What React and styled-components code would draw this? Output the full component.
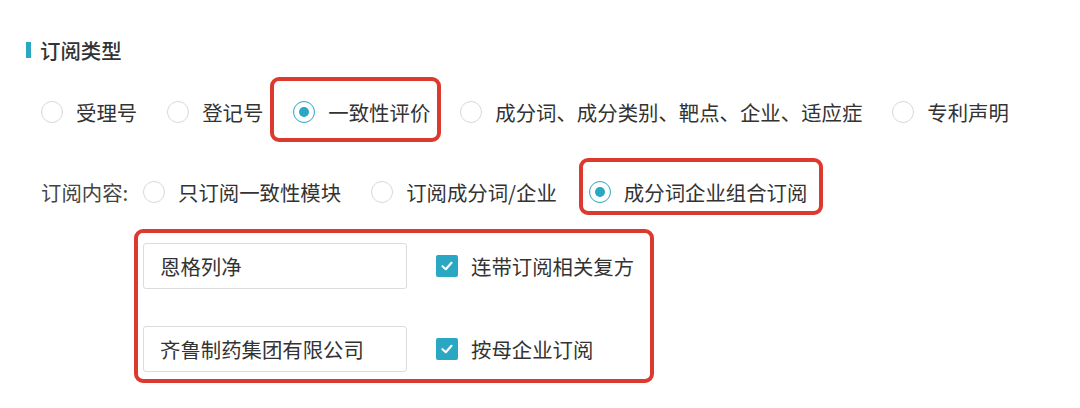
import React from 'react'
import styled, { createGlobalStyle } from 'styled-components'

const GlobalStyle = createGlobalStyle`
  body {
    margin: 0;
    background: #fff;
    font-family: 'Noto Sans CJK SC', 'Noto Sans', sans-serif;
    color: #333;
  }
`

const teal = '#29a7c3'
const red = '#dc3a2f'

const Page = styled.div`
  padding: 36px 0 0 26px;
  font-size: 20.4px;
`

const Title = styled.h2`
  margin: 0;
  display: flex;
  align-items: center;
  gap: 9px;
  height: 28px;
  font-size: 20.4px;
  font-weight: 500;
  color: #333;
  &::before {
    content: '';
    width: 5px;
    height: 16px;
    background: ${teal};
  }
`

const Row = styled.div`
  display: flex;
  align-items: center;
  gap: 30px;
  height: 40px;
  padding-left: 15px;
  margin-top: ${p => p.$top}px;
  white-space: nowrap;
`

const FieldLabel = styled.span`
  width: 102px;
  margin-right: -30px;
  color: #444;
  flex-shrink: 0;
`

const Option = styled.label`
  display: flex;
  align-items: center;
  gap: 13px;
  line-height: 28px;
  color: #333;
  cursor: pointer;
`

const Radio = styled.span`
  box-sizing: border-box;
  width: 22px;
  height: 22px;
  border-radius: 50%;
  border: ${p => (p.$checked ? `1.5px solid ${teal}` : '1px solid #d8d8d8')};
  display: flex;
  align-items: center;
  justify-content: center;
  flex-shrink: 0;
  &::after {
    content: '';
    width: 10px;
    height: 10px;
    border-radius: 50%;
    background: ${teal};
    display: ${p => (p.$checked ? 'block' : 'none')};
  }
`

// red annotation box: negative margins keep the option where it would sit without it
const Highlight = styled.div`
  display: flex;
  align-items: center;
  border: 4px solid ${red};
  border-radius: 9px;
  padding: ${p => p.$pad};
  margin: ${p => p.$margin};
`

const ComboBox = styled.div`
  display: inline-flex;
  flex-direction: column;
  gap: 37px;
  margin: 17px 0 0 108px;
  padding: 10px 16px 7px 5px;
  border: 4px solid ${red};
  border-radius: 9px;
`

const ComboRow = styled.div`
  display: flex;
  align-items: center;
  gap: 29px;
`

const TextInput = styled.input`
  box-sizing: border-box;
  width: 264px;
  height: 46px;
  padding: 0 16px;
  border: 1px solid #dcdcdc;
  border-radius: 3px;
  font-family: 'Noto Sans CJK SC', sans-serif;
  font-size: 20.4px;
  color: #333;
  background: #fff;
  outline: none;
`

const Check = styled.label`
  display: flex;
  align-items: center;
  gap: 13px;
  color: #333;
  line-height: 28px;
`

const Box = styled.span`
  width: 22px;
  height: 22px;
  border-radius: 2px;
  background: ${teal};
  display: flex;
  align-items: center;
  justify-content: center;
`

function CheckBox() {
  return (
    <Box>
      <svg width="14" height="14" viewBox="0 0 14 14">
        <polyline points="2.5,7.2 5.8,10.2 11.5,3.8" fill="none" stroke="#fff" strokeWidth="2.2" strokeLinecap="round" strokeLinejoin="round" />
      </svg>
    </Box>
  )
}

const types = ['受理号', '登记号', '一致性评价', '成分词、成分类别、靶点、企业、适应症', '专利声明']

export default function App() {
  return (
    <Page>
      <GlobalStyle />
      <Title>订阅类型</Title>

      <Row $top={28}>
        {types.map(t => {
          const opt = (
            <Option key={t}>
              <Radio $checked={t === '一致性评价'} />
              {t}
            </Option>
          )
          if (t !== '一致性评价') return opt
          return (
            <Highlight key={t} $pad="17px 7px 12px 19px" $margin="-21px -11px -16px -23px">
              {opt}
            </Highlight>
          )
        })}
      </Row>

      <Row $top={40}>
        <FieldLabel>订阅内容:</FieldLabel>
        <Option>
          <Radio />
          只订阅一致性模块
        </Option>
        <Option>
          <Radio />
          订阅成分词/企业
        </Option>
        <Highlight $pad="16px 12px 5px 6px" $margin="-20px 0 -9px -8px">
          <Option>
            <Radio $checked />
            成分词企业组合订阅
          </Option>
        </Highlight>
      </Row>

      <ComboBox>
        <ComboRow>
          <TextInput defaultValue="恩格列净" />
          <Check>
            <CheckBox />
            连带订阅相关复方
          </Check>
        </ComboRow>
        <ComboRow>
          <TextInput defaultValue="齐鲁制药集团有限公司" />
          <Check>
            <CheckBox />
            按母企业订阅
          </Check>
        </ComboRow>
      </ComboBox>
    </Page>
  )
}
